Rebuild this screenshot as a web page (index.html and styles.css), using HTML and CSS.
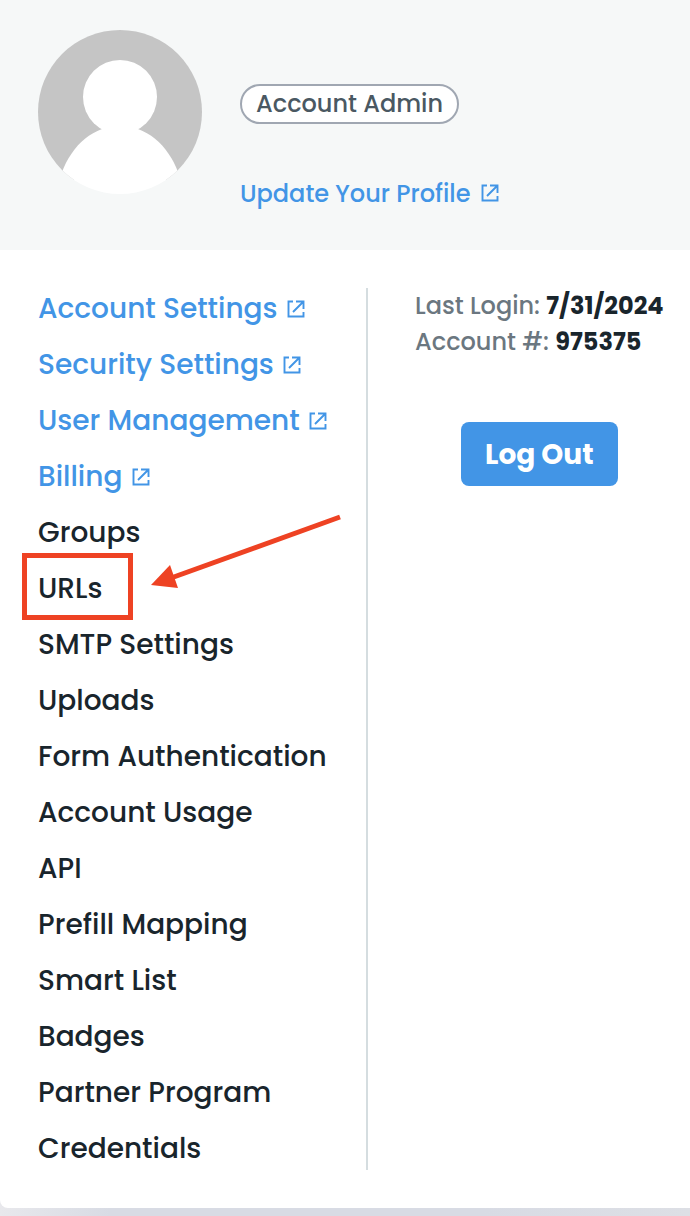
FILE: index.html
```html
<!DOCTYPE html>
<html lang="en">
<head>
    <meta charset="UTF-8">
    <meta name="viewport" content="width=device-width, initial-scale=1.0">
    <title>Account Menu</title>
    <link rel="stylesheet" href="styles.css">
</head>
<body>

<!-- External link icon, shared by the links below -->
<svg class="sprite" aria-hidden="true">
    <symbol id="external" viewBox="0 0 18 18">
        <path d="M6 1.5H1.5v15h15V12M9 1.5h7.5V9M16.5 1.5L6 12" fill="none" stroke="currentColor" stroke-width="1.9"/>
    </symbol>
</svg>

<div class="card">
    <!-- Profile header -->
    <header class="profile">
        <svg class="avatar" viewBox="0 0 164 164" role="img" aria-label="Avatar">
            <defs>
                <clipPath id="avatarClip"><circle cx="82" cy="82" r="82"/></clipPath>
            </defs>
            <g clip-path="url(#avatarClip)">
                <path d="M0 0h164v150H0z" fill="#c5c5c5"/>
                <circle cx="82" cy="67" r="37" fill="#fff"/>
                <path d="M18 164C23 134 39 108 64 99q18-5 36 0c25 9 41 35 46 65z" fill="#fff"/>
            </g>
        </svg>
        <div class="profile-info">
            <span class="role">Account Admin</span>
            <a href="#" class="profile-link">Update Your Profile <svg class="icon"><use href="#external"/></svg></a>
        </div>
    </header>

    <div class="content">
        <!-- Menu -->
        <nav class="menu">
            <ul>
                <li><a href="#" class="external">Account Settings <svg class="icon"><use href="#external"/></svg></a></li>
                <li><a href="#" class="external">Security Settings <svg class="icon"><use href="#external"/></svg></a></li>
                <li><a href="#" class="external">User Management <svg class="icon"><use href="#external"/></svg></a></li>
                <li><a href="#" class="external">Billing <svg class="icon"><use href="#external"/></svg></a></li>
                <li><a href="#">Groups</a></li>
                <li class="marked">
                    <a href="#">URLs</a>
                    <span class="mark-box"></span>
                    <svg class="mark-arrow" viewBox="0 0 190 76" aria-hidden="true">
                        <path d="M20 65L189 4" stroke="#ee4223" stroke-width="5"/>
                        <path d="M0 72L19 52L27 75z" fill="#ee4223"/>
                    </svg>
                </li>
                <li><a href="#">SMTP Settings</a></li>
                <li><a href="#">Uploads</a></li>
                <li><a href="#">Form Authentication</a></li>
                <li><a href="#">Account Usage</a></li>
                <li><a href="#">API</a></li>
                <li><a href="#">Prefill Mapping</a></li>
                <li><a href="#">Smart List</a></li>
                <li><a href="#">Badges</a></li>
                <li><a href="#">Partner Program</a></li>
                <li><a href="#">Credentials</a></li>
            </ul>
        </nav>

        <!-- Session details -->
        <section class="session">
            <p>Last Login: <strong>7/31/2024</strong></p>
            <p>Account #: <strong>975375</strong></p>
            <button type="button" class="logout">Log Out</button>
        </section>
    </div>
</div>

</body>
</html>
```
FILE: styles.css
```css
* {
    box-sizing: border-box;
}
body {
    margin: 0;
    padding-bottom: 8px;
    font-family: Poppins, Inter, sans-serif;
    font-weight: 500;
    color: #19252c;
    background: linear-gradient(to right, #e8e8ec, #d8dbe4 110px, #d8dbe4 70%, #dddfe5);
}
a {
    color: inherit;
    text-decoration: none;
}
a:hover {
    text-decoration: underline;
}
.sprite {
    display: none;
}
.card {
    background-color: #fff;
    border-radius: 0 0 0 8px;
}
.profile {
    display: flex;
    gap: 38px;
    padding: 30px 38px 38px;
    background-color: #f6f8f8;
}
.avatar {
    width: 164px;
    height: 164px;
    flex-shrink: 0;
}
.profile-info {
    display: flex;
    flex-direction: column;
    align-items: flex-start;
    gap: 52px;
    padding-top: 54px;
    font-size: 24px;
    line-height: 36px;
}
.role {
    padding: 0 14px;
    color: #4a5862;
    background-color: #fff;
    border: 2px solid #a0a7b2;
    border-radius: 20px;
}
.profile-link, .external {
    color: #4295e6;
}
.icon {
    width: 18px;
    height: 18px;
    margin-left: 4px;
}
.menu .icon {
    margin-left: 2px;
}
.content {
    display: grid;
    grid-template-columns: 330px 1fr;
    padding: 38px 27px 38px 38px;
}
.menu {
    border-right: 2px solid #d5dde0;
    font-size: 28px;
    line-height: 42px;
}
.menu ul {
    display: flex;
    flex-direction: column;
    gap: 14px;
    margin: 0;
    padding: 0;
    list-style: none;
}
.menu a {
    white-space: nowrap;
}
.marked {
    position: relative;
}
/* Red box and arrow drawn over the menu */
.mark-box {
    position: absolute;
    top: -15px;
    left: -16px;
    width: 111px;
    height: 67px;
    border: 5px solid #ee4223;
    pointer-events: none;
}
.mark-arrow {
    position: absolute;
    top: -55px;
    left: 113px;
    width: 190px;
    height: 76px;
    pointer-events: none;
}
.session {
    padding-left: 47px;
    font-size: 24px;
    line-height: 36px;
    color: #6b7780;
}
.session p {
    margin: 0;
    white-space: nowrap;
}
.session strong {
    font-weight: 700;
    color: #19252c;
}
.logout {
    display: block;
    height: 64px;
    margin: 62px auto 0;
    padding: 2px 24px 0;
    font-family: inherit;
    font-size: 28px;
    font-weight: 700;
    color: #fff;
    background-color: #4295e6;
    border: none;
    border-radius: 8px;
    cursor: pointer;
}
.logout:hover {
    background-color: #2f82d3;
}
```
